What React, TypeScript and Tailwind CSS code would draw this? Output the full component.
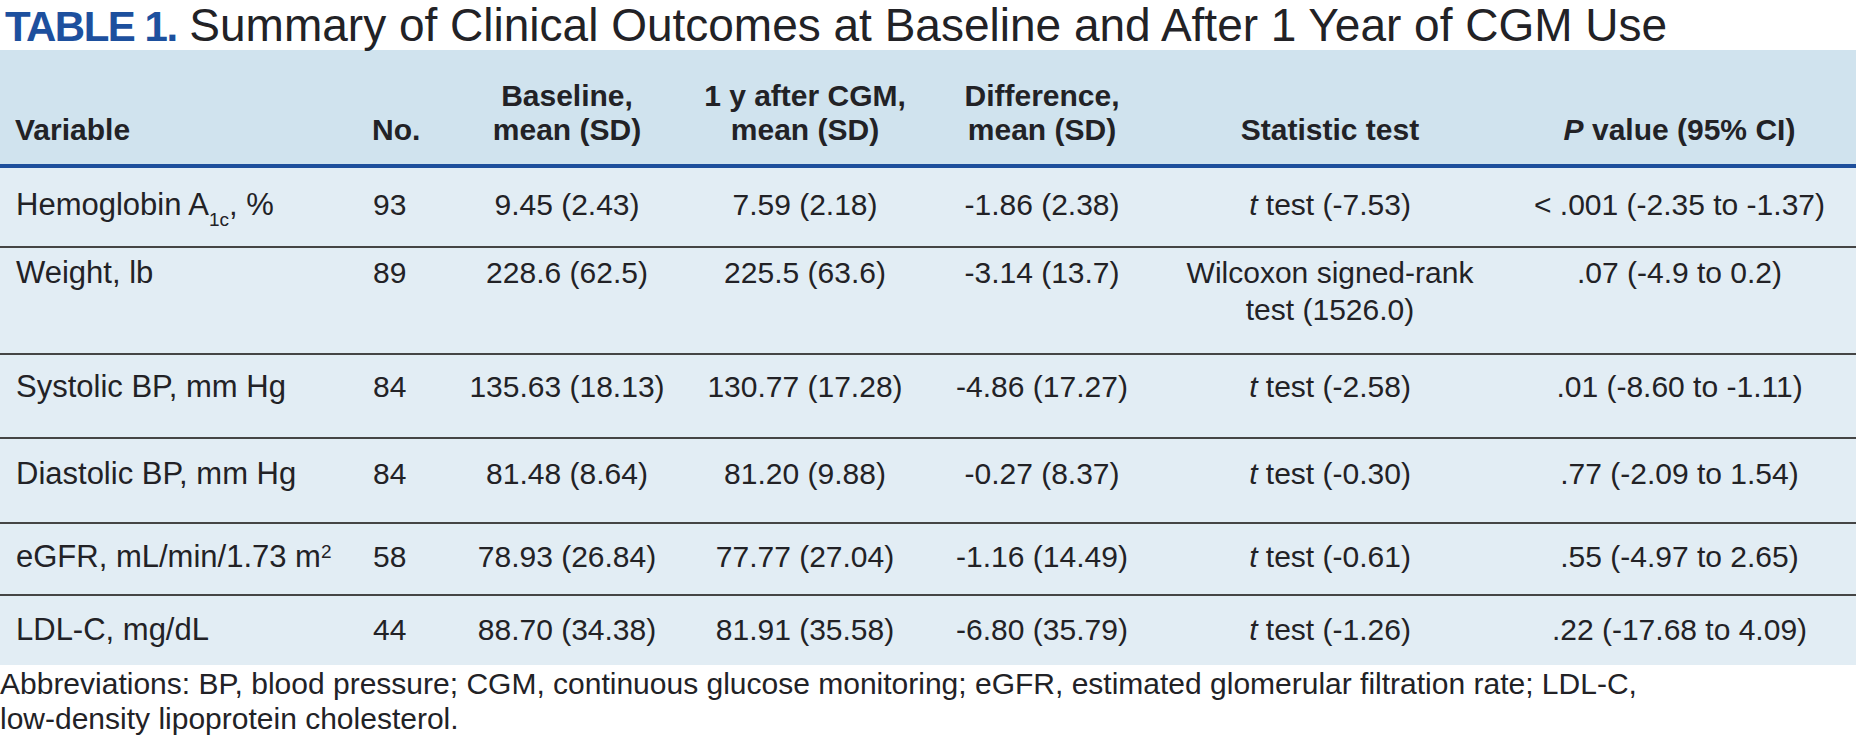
const cols = "grid grid-cols-[356px_95px_232px_244px_230px_346px_353px]";

type Row = {
  variable: React.ReactNode;
  n: string;
  base: string;
  after: string;
  diff: string;
  test: React.ReactNode;
  p: string;
  h: string;
  pt: string;
};

const TTest = ({ v }: { v: string }) => (
  <>
    <span className="italic">t</span> test ({v})
  </>
);

const rows: Row[] = [
  {
    variable: (
      <>
        Hemoglobin A<sub className="text-[19px] align-[-6px]">1c</sub>, %
      </>
    ),
    n: "93",
    base: "9.45 (2.43)",
    after: "7.59 (2.18)",
    diff: "-1.86 (2.38)",
    test: <TTest v="-7.53" />,
    p: "< .001 (-2.35 to -1.37)",
    h: "h-[78px]",
    pt: "pt-[18px]",
  },
  {
    variable: "Weight, lb",
    n: "89",
    base: "228.6 (62.5)",
    after: "225.5 (63.6)",
    diff: "-3.14 (13.7)",
    test: (
      <>
        Wilcoxon signed-rank
        <br />
        test (1526.0)
      </>
    ),
    p: ".07 (-4.9 to 0.2)",
    h: "h-[107px]",
    pt: "pt-[6px]",
  },
  {
    variable: "Systolic BP, mm Hg",
    n: "84",
    base: "135.63 (18.13)",
    after: "130.77 (17.28)",
    diff: "-4.86 (17.27)",
    test: <TTest v="-2.58" />,
    p: ".01 (-8.60 to -1.11)",
    h: "h-[84px]",
    pt: "pt-[13px]",
  },
  {
    variable: "Diastolic BP, mm Hg",
    n: "84",
    base: "81.48 (8.64)",
    after: "81.20 (9.88)",
    diff: "-0.27 (8.37)",
    test: <TTest v="-0.30" />,
    p: ".77 (-2.09 to 1.54)",
    h: "h-[85px]",
    pt: "pt-[16px]",
  },
  {
    variable: (
      <>
        eGFR, mL/min/1.73 m<sup className="text-[19px]">2</sup>
      </>
    ),
    n: "58",
    base: "78.93 (26.84)",
    after: "77.77 (27.04)",
    diff: "-1.16 (14.49)",
    test: <TTest v="-0.61" />,
    p: ".55 (-4.97 to 2.65)",
    h: "h-[72px]",
    pt: "pt-[14px]",
  },
  {
    variable: "LDL-C, mg/dL",
    n: "44",
    base: "88.70 (34.38)",
    after: "81.91 (35.58)",
    diff: "-6.80 (35.79)",
    test: <TTest v="-1.26" />,
    p: ".22 (-17.68 to 4.09)",
    h: "h-[71px]",
    pt: "pt-[15px]",
  },
];

export default function App() {
  return (
    <div className="w-[1856px] h-[743px] bg-white text-[#222226] font-['Liberation_Sans',Arial,sans-serif] overflow-hidden">
      {/* Title */}
      <div className="h-[50px] px-[5px] text-[46px] leading-[50px] whitespace-nowrap">
        <span className="font-bold text-[#1d509e] text-[42px] tracking-[-1.5px]">TABLE 1.</span> Summary of Clinical Outcomes at Baseline and After 1 Year of CGM Use
      </div>

      {/* Header */}
      <div
        className={`${cols} h-[118px] bg-[#d0e3ee] border-b-4 border-[#1d4f9c] items-end pb-[17px] text-[30px] leading-[34px] font-bold`}
      >
        <div className="pl-[15px]">Variable</div>
        <div className="pl-[16px]">No.</div>
        <div className="text-center">
          Baseline,
          <br />
          mean (SD)
        </div>
        <div className="text-center">
          1 y after CGM,
          <br />
          mean (SD)
        </div>
        <div className="text-center">
          Difference,
          <br />
          mean (SD)
        </div>
        <div className="text-center">Statistic test</div>
        <div className="text-center">
          <span className="italic">P</span> value (95% CI)
        </div>
      </div>

      {/* Body */}
      <div className="bg-[#e2edf4] text-[30px] leading-[37px]">
        {rows.map((r, i) => (
          <div
            key={i}
            className={`${cols} items-start ${r.h} ${r.pt} ${i > 0 ? "border-t-2 border-[#454545]" : ""}`}
          >
            <div className="pl-[16px] text-[31px] whitespace-nowrap">{r.variable}</div>
            <div className="pl-[17px]">{r.n}</div>
            <div className="text-center">{r.base}</div>
            <div className="text-center">{r.after}</div>
            <div className="text-center">{r.diff}</div>
            <div className="text-center">{r.test}</div>
            <div className="text-center whitespace-nowrap">{r.p}</div>
          </div>
        ))}
      </div>

      {/* Footnote */}
      <div className="pt-[1px] text-[30px] leading-[35px] whitespace-nowrap">
        Abbreviations: BP, blood pressure; CGM, continuous glucose monitoring; eGFR, estimated glomerular filtration rate; LDL-C,
        <br />
        low-density lipoprotein cholesterol.
      </div>
    </div>
  );
}
